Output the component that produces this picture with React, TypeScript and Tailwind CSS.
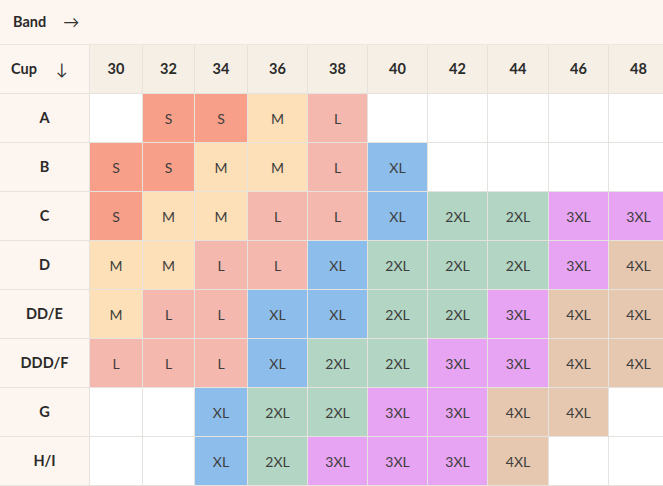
import React from 'react';

const bands = ['30', '32', '34', '36', '38', '40', '42', '44', '46', '48'];

const rows: [string, string[]][] = [
  ['A', ['', 'S', 'S', 'M', 'L', '', '', '', '', '']],
  ['B', ['S', 'S', 'M', 'M', 'L', 'XL', '', '', '', '']],
  ['C', ['S', 'M', 'M', 'L', 'L', 'XL', '2XL', '2XL', '3XL', '3XL']],
  ['D', ['M', 'M', 'L', 'L', 'XL', '2XL', '2XL', '2XL', '3XL', '4XL']],
  ['DD/E', ['M', 'L', 'L', 'XL', 'XL', '2XL', '2XL', '3XL', '4XL', '4XL']],
  ['DDD/F', ['L', 'L', 'L', 'XL', '2XL', '2XL', '3XL', '3XL', '4XL', '4XL']],
  ['G', ['', '', 'XL', '2XL', '2XL', '3XL', '3XL', '4XL', '4XL', '']],
  ['H/I', ['', '', 'XL', '2XL', '3XL', '3XL', '3XL', '4XL', '', '']],
];

const sizeBg: Record<string, string> = {
  '': 'bg-white',
  S: 'bg-[#f89f8a]',
  M: 'bg-[#fde0b7]',
  L: 'bg-[#f5b8ae]',
  XL: 'bg-[#8dbdea]',
  '2XL': 'bg-[#b2d6c3]',
  '3XL': 'bg-[#e6a4f3]',
  '4XL': 'bg-[#e6c8b0]',
};

export default function App() {
  return (
    <div
      className="w-[663px] h-[486px] overflow-hidden bg-white text-[14px]"
      style={{ fontFamily: 'Lato, "Noto Sans", sans-serif' }}
    >
      {/* Band axis */}
      <div className="h-[45px] bg-[#fdf5ef] border-b border-[#eee5de] flex items-center gap-[17px] pl-[13px] font-bold text-[#2a2a2a]">
        <span className="text-[14.5px]">Band</span>
        <span className="font-normal text-[16px] leading-none text-[#333]">→</span>
      </div>

      <div className="grid w-[668px] grid-cols-[89px_52px_51px_52px_59px_59px_59px_59px_60px_59px_59px] auto-rows-[48px] gap-px bg-[#e6e2de] border-b border-[#e6e2de]">
        <div className="bg-[#fdf5ef] flex items-center pl-[11px] gap-[19px] font-bold text-[#2a2a2a]">
          <span className="text-[14.5px]">Cup</span>
          <span className="font-normal text-[16px] leading-none text-[#333]">↓</span>
        </div>
        {bands.map((b) => (
          <div key={b} className="bg-[#f5efe6] flex items-center justify-center font-bold text-[14.5px] text-[#2a2a2a]">
            {b}
          </div>
        ))}

        {rows.map(([cup, sizes]) => (
          <React.Fragment key={cup}>
            <div className="bg-[#fdf5ef] flex items-center justify-center font-bold text-[14.5px] text-[#2a2a2a]">
              {cup}
            </div>
            {sizes.map((s, i) => (
              <div
                key={i}
                className={`${sizeBg[s]} flex items-center justify-center text-[#3d3d3d]`}
              >
                {s}
              </div>
            ))}
          </React.Fragment>
        ))}
      </div>
    </div>
  );
}
